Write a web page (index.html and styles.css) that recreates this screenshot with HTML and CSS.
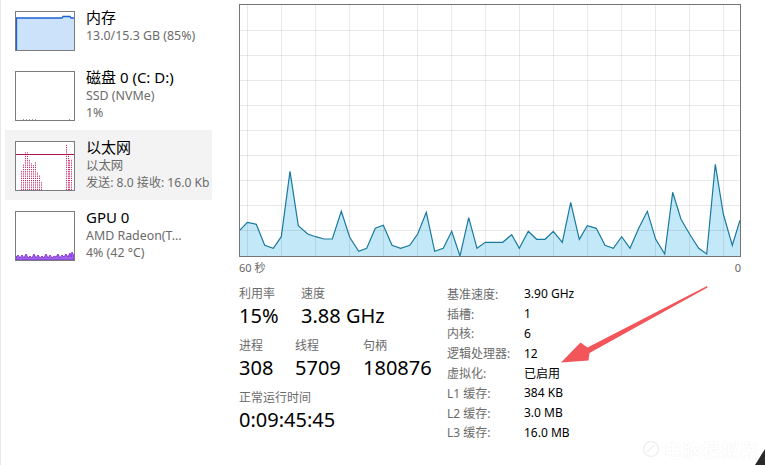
FILE: index.html
```html
<!DOCTYPE html>
<html lang="zh-CN">
<head>
<meta charset="utf-8">
<title>任务管理器 - 性能</title>
<link rel="stylesheet" href="styles.css">
</head>
<body>
<div class="app">
  <aside class="sidebar">
    <div class="item item-first">
      <div class="thumb thumb-mem">
        <svg width="58" height="38" viewBox="0 0 58 38">
          <path d="M0 6 H46 L47 4.5 H54 L55 6 H58 V38 H0 Z" fill="#cce1fa"/>
          <path d="M0.5 38 V6 H46 L47 4.5 H54 L55 6 H58" fill="none" stroke="#1a62d6" stroke-width="1.3"/>
        </svg>
      </div>
      <div class="info">
        <div class="title">内存</div>
        <div class="sub">13.0/15.3 GB (85%)</div>
      </div>
    </div>
    <div class="item">
      <div class="thumb">
        <svg width="58" height="48" viewBox="0 0 58 48">
          <path d="M7 47.5 H21 M53 47.5 H55" stroke="#9a9a9a" stroke-width="1" stroke-dasharray="1 2" fill="none"/>
        </svg>
      </div>
      <div class="info">
        <div class="title">磁盘 0 (C: D:)</div>
        <div class="sub">SSD (NVMe)</div>
        <div class="sub">1%</div>
      </div>
    </div>
    <div class="item selected">
      <div class="thumb">
        <svg width="58" height="48" viewBox="0 0 58 48">
          <g stroke="#d02a6c" stroke-width="1" stroke-dasharray="1.2 1" fill="none">
            <path d="M5.5 48 V28 M7.5 48 V22 M9.5 48 V10 M11.5 48 V10 M13.5 48 V17 M15.5 48 V21 M17.5 48 V23 M19.5 48 V20 M21.5 48 V30 M23.5 48 V33 M25.5 48 V40 M50.5 48 V3 M52.5 48 V12 M53.5 48 V17 M55.5 48 V17"/>
          </g>
          <path d="M0 12.5 H58" stroke="#b0174f" stroke-width="1"/>
        </svg>
      </div>
      <div class="info">
        <div class="title">以太网</div>
        <div class="sub">以太网</div>
        <div class="sub sub-net">发送: 8.0 接收: 16.0 Kb</div>
      </div>
    </div>
    <div class="item">
      <div class="thumb">
        <svg width="58" height="48" viewBox="0 0 58 48">
          <path d="M0 48 V45 L2 43 L4 46 L6 43 L8 46 L10 42 L12 46 L14 44 L16 46 L18 42 L20 46 L22 43 L24 46 L26 44 L28 46 L30 42 L32 46 L34 43 L36 46 L38 44 L40 45 L42 42 L44 46 L46 43 L48 45 L50 42 L52 45 L54 41 L55 45 L56 40 L58 44 V48 Z" fill="#a062e6" stroke="#7b1fd8" stroke-width="0.8"/>
        </svg>
      </div>
      <div class="info">
        <div class="title">GPU 0</div>
        <div class="sub">AMD Radeon(T...</div>
        <div class="sub">4% (42 °C)</div>
      </div>
    </div>
  </aside>

  <main class="main">
    <div class="chart">
      <svg width="500" height="251" viewBox="0 0 500 251">
        <polygon fill="#c3e8f7" points="0,225 7.3,217.3 16.3,219.3 24.7,240.3 33.3,243.3 41.3,231.7 50,166.3 58.3,220.7 67.7,229 75.7,231.7 84,234 92.3,234 101.3,206.3 109.7,232.3 118.7,246.3 126.7,243.3 135.3,223.3 143.3,220.3 152,240.3 160.7,243.3 169.7,240.3 177.7,229 186.3,207.3 194.7,246.3 203.3,243.3 211.7,226.3 220,251 228.7,212.7 237,243.3 245.3,237.3 262.7,237.3 271.7,229.7 279.3,243.3 288.3,226.3 296.7,234.3 305,234.3 313.3,226.3 322.3,237.3 330.7,197.3 339.3,234.3 347.3,220.7 356.3,223.3 365,240.3 373.3,243.3 381.7,231.7 390,243.3 398.7,223.3 407.3,206.3 415.7,234.3 424.7,249 432.7,187.3 441,214.3 449.7,229.3 458.7,243.3 466.7,249 475.3,159.3 483.3,209 492.3,240.3 500,215.3 500,251 0,251"/>
        <g stroke="rgba(0,0,0,0.085)" stroke-width="1">
          <path d="M7.5 0 V251 M41.5 0 V251 M75.5 0 V251 M109.5 0 V251 M143.5 0 V251 M177.5 0 V251 M211.5 0 V251 M245.5 0 V251 M279.5 0 V251 M313.5 0 V251 M347.5 0 V251 M381.5 0 V251 M415.5 0 V251 M449.5 0 V251 M483.5 0 V251"/>
          <path d="M0 25.5 H500 M0 50.5 H500 M0 75.5 H500 M0 100.5 H500 M0 125.5 H500 M0 150.5 H500 M0 175.5 H500 M0 200.5 H500 M0 225.5 H500"/>
        </g>
        <polyline fill="none" stroke="#1a7a9e" stroke-width="1.2" stroke-linejoin="miter" points="0,225 7.3,217.3 16.3,219.3 24.7,240.3 33.3,243.3 41.3,231.7 50,166.3 58.3,220.7 67.7,229 75.7,231.7 84,234 92.3,234 101.3,206.3 109.7,232.3 118.7,246.3 126.7,243.3 135.3,223.3 143.3,220.3 152,240.3 160.7,243.3 169.7,240.3 177.7,229 186.3,207.3 194.7,246.3 203.3,243.3 211.7,226.3 220,251 228.7,212.7 237,243.3 245.3,237.3 262.7,237.3 271.7,229.7 279.3,243.3 288.3,226.3 296.7,234.3 305,234.3 313.3,226.3 322.3,237.3 330.7,197.3 339.3,234.3 347.3,220.7 356.3,223.3 365,240.3 373.3,243.3 381.7,231.7 390,243.3 398.7,223.3 407.3,206.3 415.7,234.3 424.7,249 432.7,187.3 441,214.3 449.7,229.3 458.7,243.3 466.7,249 475.3,159.3 483.3,209 492.3,240.3 500,215.3"/>
      </svg>
    </div>
    <div class="axis">
      <span>60 秒</span>
      <span>0</span>
    </div>

    <div class="stats">
      <div class="stats-left">
        <div class="stat-row">
          <div class="stat w62">
            <div class="label">利用率</div>
            <div class="value">15%</div>
          </div>
          <div class="stat">
            <div class="label">速度</div>
            <div class="value">3.88 GHz</div>
          </div>
        </div>
        <div class="stat-row">
          <div class="stat w56">
            <div class="label">进程</div>
            <div class="value">308</div>
          </div>
          <div class="stat w68">
            <div class="label">线程</div>
            <div class="value">5709</div>
          </div>
          <div class="stat">
            <div class="label">句柄</div>
            <div class="value">180876</div>
          </div>
        </div>
        <div class="stat-row">
          <div class="stat">
            <div class="label">正常运行时间</div>
            <div class="value">0:09:45:45</div>
          </div>
        </div>
      </div>
      <div class="specs">
        <span class="k">基准速度:</span><span class="v">3.90 GHz</span>
        <span class="k">插槽:</span><span class="v">1</span>
        <span class="k">内核:</span><span class="v">6</span>
        <span class="k">逻辑处理器:</span><span class="v">12</span>
        <span class="k">虚拟化:</span><span class="v">已启用</span>
        <span class="k">L1 缓存:</span><span class="v">384 KB</span>
        <span class="k">L2 缓存:</span><span class="v">3.0 MB</span>
        <span class="k">L3 缓存:</span><span class="v">16.0 MB</span>
      </div>
    </div>
  </main>
</div>

<svg class="arrow" width="765" height="465" viewBox="0 0 765 465">
  <polygon points="707,286 587.5,347.5 580.5,342.5 561,362.5 588.5,360.5 589.5,353 707.5,287.5" fill="#f2555a"/>
  <polygon points="765,449 765,465 755,465" fill="#2a2a2a"/>
</svg>
<div class="watermark">
  <span class="wm-logo">
    <svg width="18" height="18" viewBox="0 0 18 18"><circle cx="9" cy="9" r="7.5" fill="none" stroke="#efefef" stroke-width="1.5"/><path d="M5 12 L12 5" stroke="#efefef" stroke-width="1.5"/></svg>
  </span>
  <span class="wm-text">电脑模拟器</span>
</div>
</body>
</html>
```

FILE: styles.css
```css
* { box-sizing: border-box; }

html, body {
  margin: 0;
  padding: 0;
  background: #ffffff;
}

body {
  width: 765px;
  height: 465px;
  overflow: hidden;
  position: relative;
  font-family: "Noto Sans", "Noto Sans CJK SC", sans-serif;
  color: #000;
}

.app {
  display: flex;
  height: 465px;
}

/* sidebar */
.sidebar {
  width: 215px;
  flex: none;
  border-left: 1px solid #e8e8e8;
  padding-left: 4px;
}

.item {
  width: 207px;
  height: 70px;
  display: flex;
  align-items: flex-start;
  padding: 11px 0 0 10px;
  overflow: hidden;
}

.item-first {
  height: 60px;
}

.item.selected {
  background: #f3f3f3;
}

.thumb {
  width: 60px;
  height: 50px;
  flex: none;
  border: 1px solid #7c7c7c;
  background: #fff;
}

.thumb svg { display: block; }

.thumb-mem {
  height: 40px;
}

.info {
  margin-left: 11px;
  margin-top: -4px;
  min-width: 0;
  white-space: nowrap;
}

.title {
  font-size: 15px;
  line-height: 20px;
  color: #000;
}

.sub {
  font-size: 12.4px;
  line-height: 17px;
  color: #6b6b6b;
}

.sub-net {
  font-size: 12.1px;
  letter-spacing: 0;
}

/* main */
.main {
  flex: 1;
  padding-left: 24px;
  padding-top: 4px;
}

.chart {
  width: 502px;
  height: 253px;
  border: 1px solid #747474;
  background: #fff;
}

.chart svg { display: block; }

.axis {
  width: 502px;
  display: flex;
  justify-content: space-between;
  font-size: 11px;
  line-height: 14px;
  color: #666;
  margin-top: 4px;
}

.stats {
  display: flex;
  margin-top: 9px;
}

.stats-left {
  width: 208px;
  padding-top: 2px;
  display: flex;
  flex-direction: column;
  gap: 10px;
}

.stat-row {
  display: flex;
}

.w62 { width: 62px; }
.w56 { width: 56px; }
.w68 { width: 68px; }

.label {
  font-size: 12px;
  line-height: 16px;
  color: #6b6b6b;
}

.value {
  font-size: 20px;
  line-height: 24px;
  margin-top: 2px;
  color: #000;
}

.specs {
  display: grid;
  grid-template-columns: 77px auto;
  grid-auto-rows: 19.8px;
  align-items: center;
  font-size: 12px;
}

.specs .k { color: #6b6b6b; }
.specs .v { color: #000; }

/* overlays */
.arrow {
  position: absolute;
  left: 0;
  top: 0;
  pointer-events: none;
}

.watermark {
  position: absolute;
  left: 642px;
  top: 436px;
  display: flex;
  align-items: center;
  gap: 4px;
  pointer-events: none;
}

.wm-logo svg { display: block; }

.wm-text {
  font-size: 18px;
  font-weight: 700;
  color: #ffffff;
  text-shadow: 0 0 1px #e6e6e6;
  letter-spacing: 1px;
}
```
